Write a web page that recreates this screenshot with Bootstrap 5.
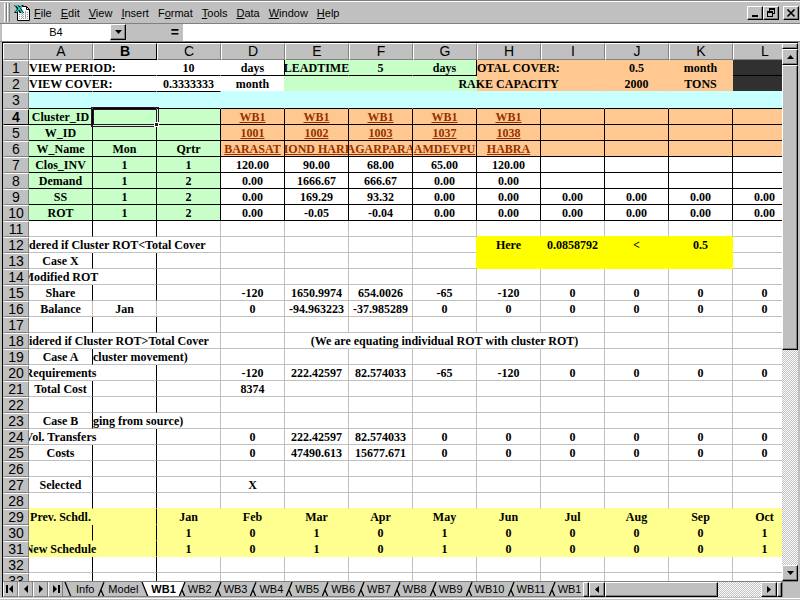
<!DOCTYPE html>
<html lang="en">
<head>
<meta charset="utf-8">
<meta name="viewport" content="width=device-width, initial-scale=1">
<title>Worksheet WB1</title>
<link href="https://cdn.jsdelivr.net/npm/bootstrap@5.3.0/dist/css/bootstrap.min.css" rel="stylesheet">
<style>
:root{--face:#c0c0c0;--shade:#808080;--green:#c8ffc8;--cyan:#c8ffff;--orange:#ffc890;--pale:#ffff90;--bright:#ffff00}
body{background:var(--face);color:#000;font:11px/14px "Liberation Sans",Arial,sans-serif}
button,input{font:inherit;color:inherit;border-radius:0}
.menubar{height:24px;border-top:1px solid var(--shade);border-bottom:1px solid var(--shade);box-shadow:inset 0 1px #fff;padding:2px 1px 0 4px}
.menubar button,.tabs button,.arrows button,.eq{background:none;border:0;padding:0}
.menubar .raised{background:var(--face);border:1px solid;border-color:#fff #000 #000 #fff}
.closebtn{margin-left:4px}
.grip{width:3px;height:19px;border-left:1px solid #fff;border-right:1px solid var(--shade)}
.menus{gap:9px;margin-left:4px;font-size:11px}
.raised{background:var(--face);border:1px solid;border-color:#fff #000 #000 #fff;box-shadow:inset -1px -1px var(--shade);padding:0;display:flex;align-items:center;justify-content:center;flex:none}
.winbtn{width:16px;height:14px}
.formula{height:18px;padding-left:2px;border-bottom:1px solid var(--shade)}
.namebox{width:108px;border:0;padding:0;text-align:center;background:#fff}
.fx{border:0;background:#fff;min-width:0}
.eq{width:57px;text-align:right;padding-right:4px!important;font-weight:bold;font-size:14px}
.book{border-left:1px solid #000;border-top:1px solid #000;margin:0 2px;min-height:0}
.sheet{background:#fff;min-width:0}
.grid{table-layout:fixed;width:794px;border-collapse:separate;border-spacing:0}
.grid .rh{width:26px}
.grid th{background:var(--face);font:14px/15px "Liberation Sans",Arial,sans-serif;text-align:center;padding:0;border:1px solid;border-color:#fff var(--shade) var(--shade) #fff}
.grid thead th{height:17px}
.grid thead th.picked,.grid tbody th.picked{font-weight:bold;border-right-color:#000;border-bottom-color:#000}
.grid tbody th{position:relative;z-index:3;line-height:14px;border-left-color:var(--face)}
.grid td{height:16px;padding:0;border:0 solid var(--face);border-width:0 1px 1px 0;font:bold 12px/15px "Liberation Serif","Times New Roman",serif}
.grid .band td,.grid .band th{height:17px}
.grid td>div{display:flex;justify-content:center;white-space:nowrap;height:15px;padding-top:1px}
.grid td.start>div{justify-content:flex-start}
.grid td.cut>div{overflow:hidden}
.grid a{color:#983000;text-decoration:underline}
.f-g{background:var(--green)}.f-c{background:var(--cyan)}.f-o{background:var(--orange)}.f-p{background:var(--pale)}.f-y{background:var(--bright)}.f-d{background:#303030}
.grid .r-k{border-right-color:#000}.grid .b-k{border-bottom-color:#000}
.grid .r-w{border-right-color:#fff}.grid .r-g{border-right-color:var(--green)}.grid .r-c{border-right-color:var(--cyan)}.grid .r-o{border-right-color:var(--orange)}.grid .r-p{border-right-color:var(--pale)}.grid .r-y{border-right-color:var(--bright)}.grid .r-d{border-right-color:#303030}
.grid .b-c{border-bottom-color:var(--cyan)}.grid .b-o{border-bottom-color:var(--orange)}.grid .b-p{border-bottom-color:var(--pale)}.grid .b-y{border-bottom-color:var(--bright)}
.grid .cursor{position:relative}
.cursor::after{content:"";position:absolute;inset:-2px -3px -3px -2px;border:3px double #301030;z-index:2}
.cursor::before{content:"";position:absolute;right:-3px;bottom:-3px;width:5px;height:5px;background:#301030;border:1px solid #fff;z-index:4}
.track{background:repeating-conic-gradient(#fff 0 25%,var(--face) 0 50%) 0 0/2px 2px}
.vbar{width:16px}
.split{height:6px}
.vbtn{width:16px;height:16px}
.vthumb{flex:285}.vrest{flex:217}
.bottom{height:16px;border-top:1px solid var(--shade)}
.arrows button{width:15px;height:15px;border-left:1px solid #fff;border-right:1px solid var(--shade);border-bottom:1px solid var(--shade);display:flex;align-items:center;justify-content:center}
.tabs{font-size:11px;min-width:0;overflow:hidden;border-bottom:1px solid var(--shade)}
.tabs button{line-height:15px;white-space:nowrap;flex:none}
.tabs .wide{padding:0 1px}
.tabs .active{font-weight:bold;background:#fff}
.tabs svg,.arrows svg{flex:none}
.hbar{width:199px;flex:none}
.hthumb{flex:112}.hrest{flex:43}
.corner{width:16px;border-left:1px solid var(--shade)}
.foot{height:2px;border-top:1px solid #fff;margin-top:1px}
</style>
</head>
<body>
<div class="vh-100 d-flex flex-column overflow-hidden">
  <header class="menubar d-flex align-items-center">
    <span class="d-flex"><i class="grip"></i><i class="grip"></i></span>
    <svg class="ms-1" width="16" height="17" viewBox="1 0 16 17" role="img" aria-label="Workbook">
      <path d="M4.500 2.500h9l3 3v11h-12z" fill="#fff" stroke="#000"/><path d="M13.500 2.500v3h3" fill="none" stroke="#000"/>
      <path d="M6 8.500h9M6 10.500h9M6 12.500h9M6 14.500h9M9.500 7v8M12.500 7v8" stroke="#a0a0a0" stroke-dasharray="1 1"/>
      <path d="M1 1h4l2 2 2-2h2L8 4l3 5H7L5.500 7 4 9H1l3-4z" fill="#000"/><path d="M2 1.500h2l5 7h1M9 2L3 8" fill="none" stroke="#20d8d8" stroke-width="1.300"/>
    </svg>
    <nav class="menus d-flex flex-grow-1" aria-label="Menu">
      <button type="button"><u>F</u>ile</button><button type="button"><u>E</u>dit</button><button type="button"><u>V</u>iew</button><button type="button"><u>I</u>nsert</button><button type="button">F<u>o</u>rmat</button><button type="button"><u>T</u>ools</button><button type="button"><u>D</u>ata</button><button type="button"><u>W</u>indow</button><button type="button"><u>H</u>elp</button>
    </nav>
    <button type="button" class="raised winbtn" aria-label="Minimize"><svg width="12" height="10"><path d="M3 7h6v2H3z"/></svg></button>
    <button type="button" class="raised winbtn" aria-label="Restore"><svg width="12" height="10"><path d="M4 0h6v6H8V5h1V2H5v1H4zM2 3h6v6H2zM3 5v3h4V5z" fill-rule="evenodd"/></svg></button>
    <button type="button" class="raised winbtn closebtn" aria-label="Close"><svg width="12" height="10"><path d="M2.500 1.500l7 7M9.500 1.500l-7 7" stroke="#000" stroke-width="1.700"/></svg></button>
  </header>
  <div class="formula d-flex flex-shrink-0">
    <input class="namebox" type="text" value="B4" aria-label="Name box">
    <button type="button" class="raised vbtn" aria-label="Open names"><svg width="7" height="4"><path d="M0 0h7L3.500 4z"/></svg></button>
    <button type="button" class="eq" aria-label="Edit formula">=</button>
    <input class="fx flex-grow-1" type="text" aria-label="Formula">
  </div>
  <main class="book d-flex flex-column flex-grow-1">
    <div class="d-flex flex-grow-1 overflow-hidden">
      <div class="sheet flex-grow-1 overflow-hidden">
        <table class="grid"><thead></thead><tbody></tbody></table>
      </div>
      <div class="vbar track d-flex flex-column flex-shrink-0">
        <div class="raised split"></div>
        <button type="button" class="raised vbtn" aria-label="Scroll up"><svg width="7" height="4"><path d="M0 4h7L3.500 0z"/></svg></button>
        <div class="raised vthumb"></div><div class="vrest"></div>
        <button type="button" class="raised vbtn" aria-label="Scroll down"><svg width="7" height="4"><path d="M0 0h7L3.500 4z"/></svg></button>
      </div>
    </div>
    <div class="bottom d-flex flex-shrink-0">
      <div class="arrows d-flex">
        <button type="button" aria-label="First sheet"><svg width="9" height="8"><path d="M0 0h2v8H0zM7 0v8L3 4z"/></svg></button>
        <button type="button" aria-label="Previous sheet"><svg width="6" height="8"><path d="M5 0v8L1 4z"/></svg></button>
        <button type="button" aria-label="Next sheet"><svg width="6" height="8"><path d="M1 0v8l4-4z"/></svg></button>
        <button type="button" aria-label="Last sheet"><svg width="9" height="8"><path d="M7 0h2v8H7zM2 0v8l4-4z"/></svg></button>
      </div>
      <div class="tabs d-flex flex-grow-1"></div>
      <div class="hbar track d-flex">
        <div class="raised split h-100" style="width:6px"></div>
        <button type="button" class="raised vbtn h-100" aria-label="Scroll left"><svg width="4" height="7"><path d="M4 0v7L0 3.500z"/></svg></button>
        <div class="raised hthumb"></div><div class="hrest"></div>
        <button type="button" class="raised vbtn h-100" aria-label="Scroll right"><svg width="4" height="7"><path d="M0 0v7l4-3.500z"/></svg></button>
        <div class="raised" style="width:5px"></div>
      </div>
      <div class="corner flex-shrink-0"></div>
    </div>
  </main>
  <div class="foot flex-shrink-0"></div>
</div>
<script src="https://cdn.jsdelivr.net/npm/bootstrap@5.3.0/dist/js/bootstrap.bundle.min.js"></script>
<script>
const cols = 'ABCDEFGHIJKL';
// Cell text, one line per row, columns A to L separated by "|".
const text = {
1:'VIEW PERIOD:||10|days|LEADTIME|5|days|OTAL COVER:||0.5|month|',
2:'VIEW COVER:||0.3333333|month||||RAKE CAPACITY||2000|TONS|',
4:'Cluster_ID|||WB1|WB1|WB1|WB1|WB1||||',
5:'W_ID|||1001|1002|1003|1037|1038||||',
6:'W_Name|Mon|Qrtr|BARASAT|IOND HARI|AGARPARA|AMDEVPU|HABRA||||',
7:'Clos_INV|1|1|120.00|90.00|68.00|65.00|120.00||||',
8:'Demand|1|2|0.00|1666.67|666.67|0.00|0.00||||',
9:'SS|1|2|0.00|169.29|93.32|0.00|0.00|0.00|0.00|0.00|0.00',
10:'ROT|1|2|0.00|-0.05|-0.04|0.00|0.00|0.00|0.00|0.00|0.00',
12:'dered if Cluster ROT<Total Cover|||||||Here|0.0858792|<|0.5|',
13:'Case X', 14:'Modified ROT',
15:'Share|||-120|1650.9974|654.0026|-65|-120|0|0|0|0',
16:'Balance|Jan||0|-94.963223|-37.985289|0|0|0|0|0|0',
18:'idered if Cluster ROT>Total Cover||||||(We are equating individual ROT with cluster ROT)',
19:'Case A|cluster movement)',
20:'Requirements|||-120|222.42597|82.574033|-65|-120|0|0|0|0',
21:'Total Cost|||8374',
23:'Case B|ging from source)',
24:'Vol. Transfers|||0|222.42597|82.574033|0|0|0|0|0|0',
25:'Costs|||0|47490.613|15677.671|0|0|0|0|0|0',
27:'Selected|||X',
29:'Prev. Schdl.||Jan|Feb|Mar|Apr|May|Jun|Jul|Aug|Sep|Oct',
30:'||1|0|1|0|1|0|0|0|0|1',
31:'New Schedule||1|0|1|0|1|0|0|0|0|1'
};
// Fill of each column, row by row; "." is unfilled.
const fills = {1:'....gggooood',2:'....gggooood',3:'cccccccccccc',12:'.......yyyy.',13:'.......yyyy.'};
for (const r of [4,5,6]) fills[r] = 'gggooooooooo';
for (const r of [7,8,9,10]) fills[r] = 'ggg.........';
for (const r of [29,30,31]) fills[r] = 'pppppppppppp';
const fill = (r,c) => (fills[r] || '............')[c] || '.';
// Rows where text runs over the right edge of a column.
const spill = {A:[12,14,18,20,24,29,31],B:[12,18,19,23],E:[18],F:[18],G:[18],H:[18]};
const left = ['A1','A2','H1','A12','A18','B19','B23'];
function rightLine(r,c){
  const k = cols[c], f = fill(r,c);
  if (r === 1) return k==='D'||k==='G' ? 'k' : f==='.' ? 'w' : f;
  if (r <= 3) return f==='.' ? (k==='D' ? 'g' : 'w') : f;
  if (r <= 10) return 'k';
  if ((spill[k]||[]).includes(r)) return f==='.' ? 'w' : f;
  if (c < 2) return r===16 ? '' : 'k';
  const n = fill(r,c+1);
  return f!=='.' ? f : n!=='.' ? n : '';
}
function bottomLine(r,c){
  if (r === 1) return c<7||c===11 ? 'k' : fill(r,c);
  if (r === 2) return c<3 ? 'k' : 'c';
  if (r <= 10) return 'k';
  const f = fill(r,c), n = fill(r+1,c);
  return f!=='.' ? f : n!=='.' ? n : '';
}
document.querySelector('.grid thead').innerHTML = '<tr><th class="rh" scope="col" aria-label="Row"></th>' +
  [...cols].map(k => `<th scope="col" class="${k==='B'?'picked':''}">${k}</th>`).join('') + '</tr>';
let html = '';
for (let r = 1; r <= 33; r++) {
  const t = (text[r] || '').split('|');
  html += `<tr class="${r===3?'band':''}"><th scope="row" class="${r===4?'picked':''}">${r}</th>`;
  for (let c = 0; c < 12; c++) {
    const k = cols[c]+r, v = (t[c]||'').replace('<','&lt;').replace('>','&gt;');
    const cls = ['f-'+fill(r,c),'r-'+rightLine(r,c),'b-'+bottomLine(r,c)].filter(x => !/[-.]$/.test(x));
    if (left.includes(k)) cls.push('start');
    if (r===6 && c>2) cls.push('cut');
    if (k==='B4') cls.push('cursor');
    const body = v && r>3 && r<7 && c>2 ? `<a href="#">${v}</a>` : v && `<span>${v}</span>`;
    html += `<td class="${cls.join(' ')}">${body ? `<div>${body}</div>` : ''}</td>`;
  }
  html += '</tr>';
}
document.querySelector('.grid tbody').innerHTML = html;

const names = ['Info','Model','WB1','WB2','WB3','WB4','WB5','WB6','WB7','WB8','WB9','WB10','WB11','WB1'];
const edge = (l, rr, d) => `<svg width="12" height="15" viewBox="0 0 12 15" aria-hidden="true">${l?'<path fill="#fff" d="M0 0h9L3 15H0z"/>':''}${rr?'<path fill="#fff" d="M3 0l6 15h3V0z"/>':''}<path d="${d}" fill="none" stroke="#000" stroke-width="1.300"/></svg>`;
document.querySelector('.tabs').innerHTML = edge(0,0,'M2 0l6 15') + names.map((n,i) =>
  `<button type="button" class="${i===2?'active':i<2?'wide':''}">${n}</button>` +
  (i===names.length-1 ? '' : edge(i===2, i===1, i===1 ? 'M3 0l6 15' : 'M9 0L3 15M6 8l3 7'))).join('');
</script>
</body>
</html>
